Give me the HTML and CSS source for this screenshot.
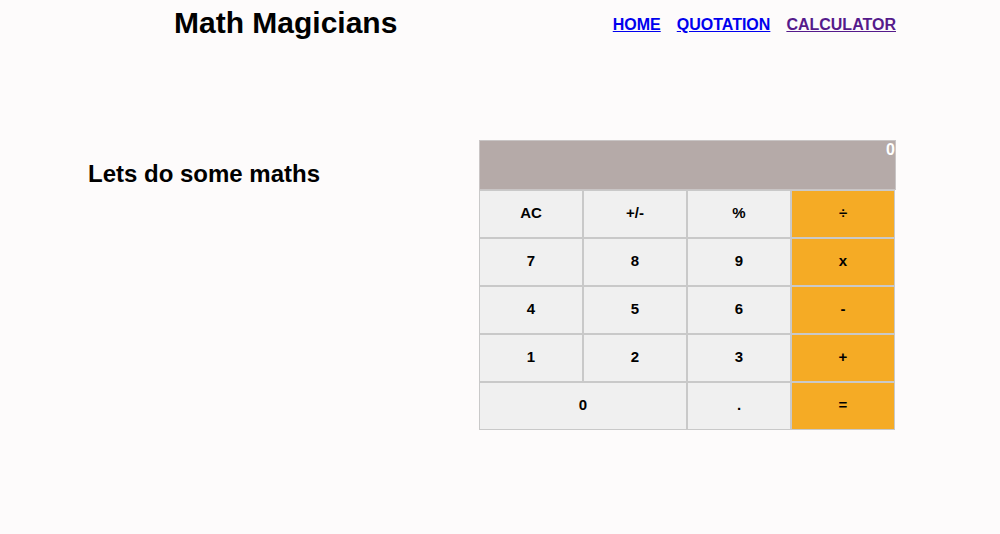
FILE: index.html
```html
<!DOCTYPE html>
<html lang="en">
<head>
<meta charset="utf-8">
<title>Math Magicians</title>
<link rel="stylesheet" href="styles.css">
</head>
<body>
<header class="header">
  <h1 class="logo">Math Magicians</h1>
  <nav class="nav">
    <a class="nav-link" href="#home">HOME</a>
    <a class="nav-link" href="#quote">QUOTATION</a>
    <a class="nav-link visited" href="#calc">CALCULATOR</a>
  </nav>
</header>
<main class="main">
  <section class="intro">
    <h2 class="intro-title">Lets do some maths</h2>
  </section>
  <div class="calculator">
    <div class="display">0</div>
    <div class="keys">
      <button class="key">AC</button>
      <button class="key">+/-</button>
      <button class="key">%</button>
      <button class="key op">÷</button>
      <button class="key">7</button>
      <button class="key">8</button>
      <button class="key">9</button>
      <button class="key op">x</button>
      <button class="key">4</button>
      <button class="key">5</button>
      <button class="key">6</button>
      <button class="key op">-</button>
      <button class="key">1</button>
      <button class="key">2</button>
      <button class="key">3</button>
      <button class="key op">+</button>
      <button class="key wide">0</button>
      <button class="key">.</button>
      <button class="key op">=</button>
    </div>
  </div>
</main>
</body>
</html>
```
FILE: styles.css
```css
* {
  box-sizing: border-box;
}

body {
  margin: 0;
  background: #fdfbfb;
  font-family: "Liberation Sans", Arial, sans-serif;
  color: #000;
}

.header {
  display: flex;
  justify-content: space-between;
  align-items: center;
  padding: 5px 104px 0 174px;
}

.logo {
  margin: 0;
  font-size: 30px;
  line-height: 36px;
  font-weight: bold;
}

.nav {
  display: flex;
  gap: 16px;
  padding-top: 3px;
}

.nav-link {
  font-size: 16px;
  font-weight: bold;
  line-height: 18px;
  color: #0000ee;
  text-decoration: underline;
}

.nav-link.visited {
  color: #551a8b;
}

.main {
  display: flex;
  align-items: flex-start;
  padding: 99px 0 0 88px;
}

.intro {
  width: 391px;
}

.intro-title {
  margin: 20px 0 0;
  font-size: 24px;
  line-height: 28px;
  font-weight: bold;
}

.calculator {
  width: 417px;
}

.display {
  height: 50px;
  background: #b5aaa8;
  border: 1px solid #c9c5c5;
  color: #fff;
  font-size: 16px;
  font-weight: bold;
  line-height: 18px;
  text-align: right;
  padding: 0;
}

.keys {
  display: grid;
  grid-template-columns: repeat(4, 104px);
  grid-auto-rows: 48px;
}

.key {
  margin: 0;
  padding: 0 0 4px;
  border: 1px solid #c9c9c9;
  background: #f0f0f0;
  font-family: "Liberation Sans", Arial, sans-serif;
  font-size: 15px;
  font-weight: bold;
  color: #000;
}

.key.op {
  background: #f5ab25;
}

.key.wide {
  grid-column: span 2;
}
```
